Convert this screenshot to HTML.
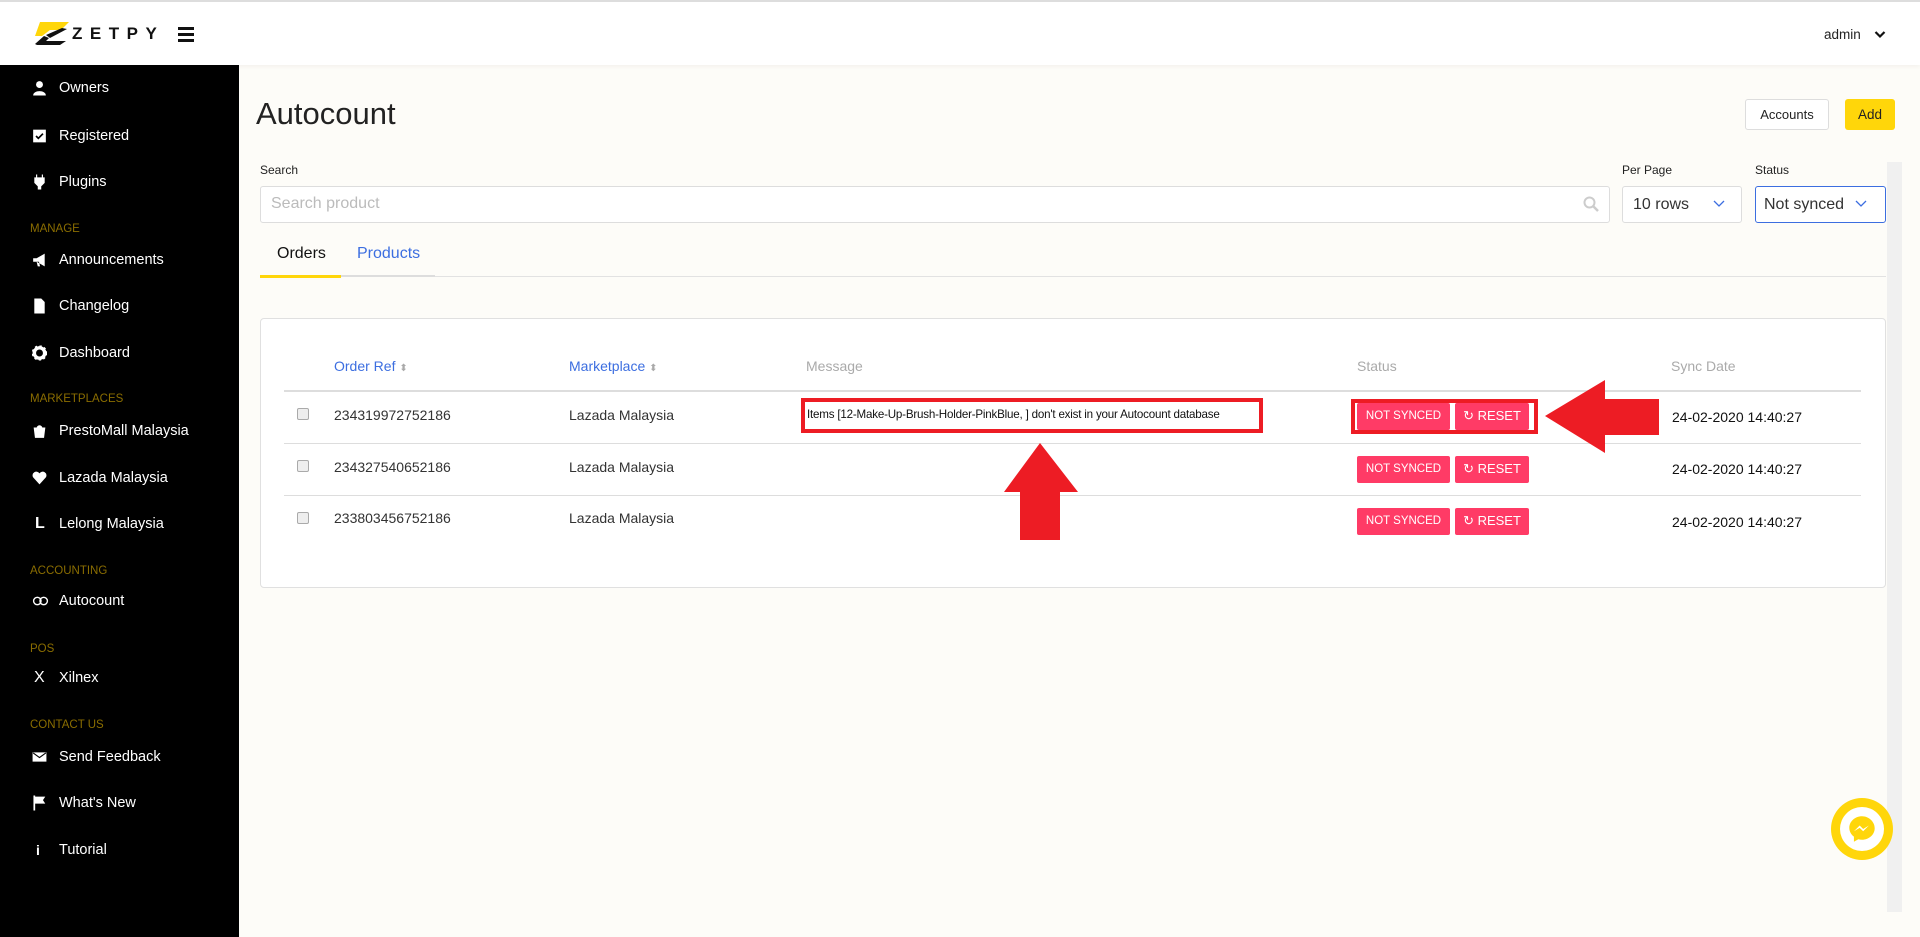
<!DOCTYPE html>
<html><head><meta charset="utf-8"><style>
*{margin:0;padding:0;box-sizing:border-box}
body{width:1920px;height:937px;overflow:hidden;background:#fdfcf8;font-family:"Liberation Sans",sans-serif;position:relative;color:#222}
.a{position:absolute}
#hdr{left:0;top:0;width:1920px;height:65px;background:#fff;border-top:2px solid #ddd;box-shadow:0 2px 4px rgba(0,0,0,.04)}
#side{left:0;top:65px;width:239px;height:872px;background:#000}
.it{position:absolute;left:59px;color:#fff;font-size:14.5px;transform:translateY(-50%)}
.ic{position:absolute;left:32px;width:15px;height:15px;transform:translateY(-50%)}
.sec{position:absolute;left:30px;color:#8a6d00;font-size:11.5px;transform:translateY(-50%)}
.th{position:absolute;top:366px;transform:translateY(-50%);font-size:14px}
.td{position:absolute;transform:translateY(-50%);font-size:14px;color:#333}
.cb{position:absolute;left:297px;width:12px;height:12px;border:1px solid #aaa;border-radius:2px;background:#eee;transform:translateY(-50%)}
.ln{position:absolute;left:284px;width:1577px;height:1px;background:#ddd}
.ns{position:absolute;left:1357px;width:93px;height:27px;background:#ff3b66;color:#fff;font-size:11.5px;text-align:center;line-height:27px;border-radius:2px}
.rs{position:absolute;left:1455px;width:74px;height:27px;background:#ff3b66;color:#fff;font-size:13px;text-align:center;line-height:26px;border-radius:2px}
.dt{position:absolute;left:1672px;font-size:14px;color:#111;transform:translateY(-50%)}
</style></head><body>
<div id="hdr" class="a">
<svg class="a" style="left:34px;top:19px" width="36" height="25" viewBox="0 0 36 25"><path d="M6 1h29l-8 8H16l-8 6H1z" fill="#ffd60a"/><path d="M1 23l9-8 5 2-3 3h20l-6 4H3z" fill="#111"/><path d="M12 14l16-7 5 1-17 9z" fill="#111"/></svg>
<div class="a" style="left:72px;top:22px;font-size:17px;font-weight:bold;letter-spacing:7.5px;color:#111">ZETPY</div>
<div class="a" style="left:178px;top:25px;width:16px;height:3px;background:#111"></div>
<div class="a" style="left:178px;top:31px;width:16px;height:3px;background:#111"></div>
<div class="a" style="left:178px;top:37px;width:16px;height:3px;background:#111"></div>
<div class="a" style="left:1824px;top:25px;font-size:13.5px;color:#222">admin</div>
<svg class="a" style="left:1874px;top:28px" width="12" height="9" viewBox="0 0 12 9"><path d="M1.5 2l4.5 4.5L10.5 2" stroke="#111" stroke-width="2.2" fill="none"/></svg>
</div>
<div id="side" class="a"></div>
<svg class="ic" style="top:88px" viewBox="0 0 13 13"><circle cx="6.5" cy="3.5" r="3" fill="#fff"/><path d="M1 13c0-5 11-5 11 0z" fill="#fff"/></svg><div class="it" style="top:88px">Owners</div>
<svg class="ic" style="top:136px" viewBox="0 0 13 13"><rect x="1" y="1" width="11" height="11" fill="#fff"/><path d="M3.5 6.5l2 2 4-4" stroke="#000" stroke-width="1.5" fill="none"/></svg><div class="it" style="top:136px">Registered</div>
<svg class="ic" style="top:182px" viewBox="0 0 13 13"><path d="M4 0v3M9 0v3M2.5 3h8v4l-3 3v3h-2v-3l-3-3z" stroke="#fff" fill="#fff"/></svg><div class="it" style="top:182px">Plugins</div>
<div class="sec" style="top:229px">MANAGE</div>
<svg class="ic" style="top:260px" viewBox="0 0 13 13"><path d="M1 5h3l7-4v11L4 8H1z M4 8l1 4h2l-1-4" fill="#fff"/></svg><div class="it" style="top:260px">Announcements</div>
<svg class="ic" style="top:306px" viewBox="0 0 13 13"><path d="M2 0h6l3 3v10H2z" fill="#fff"/></svg><div class="it" style="top:306px">Changelog</div>
<svg class="ic" style="top:353px" viewBox="0 0 13 13"><circle cx="6.5" cy="6.5" r="4.5" fill="none" stroke="#fff" stroke-width="3"/><circle cx="6.5" cy="6.5" r="6" fill="none" stroke="#fff" stroke-width="1.5" stroke-dasharray="2 2"/></svg><div class="it" style="top:353px">Dashboard</div>
<div class="sec" style="top:399px">MARKETPLACES</div>
<svg class="ic" style="top:431px" viewBox="0 0 13 13"><path d="M2 4h9l-1 8H3z M4.5 4a2 2 0 014 0" fill="#fff" stroke="#fff"/></svg><div class="it" style="top:431px">PrestoMall Malaysia</div>
<svg class="ic" style="top:478px" viewBox="0 0 13 13"><path d="M6.5 12L1 6a3 3 0 015.5-3.5A3 3 0 0112 6z" fill="#fff"/></svg><div class="it" style="top:478px">Lazada Malaysia</div>
<div class="it" style="top:524px;left:35px;font-weight:bold;font-size:16px">L</div><div class="it" style="top:524px">Lelong Malaysia</div>
<div class="sec" style="top:571px">ACCOUNTING</div>
<svg class="ic" style="top:601px;width:17px" viewBox="0 0 16 13"><circle cx="5" cy="6.5" r="3.5" fill="none" stroke="#fff" stroke-width="1.3"/><circle cx="11" cy="6.5" r="3.5" fill="none" stroke="#fff" stroke-width="1.3"/></svg><div class="it" style="top:601px">Autocount</div>
<div class="sec" style="top:649px">POS</div>
<div class="it" style="top:678px;left:34px;font-size:16px">X</div><div class="it" style="top:678px">Xilnex</div>
<div class="sec" style="top:725px">CONTACT US</div>
<svg class="ic" style="top:757px" viewBox="0 0 13 13"><rect x="0.5" y="2.5" width="12" height="8" fill="#fff"/><path d="M1 3l5.5 4 5.5-4" stroke="#000" fill="none"/></svg><div class="it" style="top:757px">Send Feedback</div>
<svg class="ic" style="top:803px" viewBox="0 0 13 13"><path d="M2 0v13" stroke="#fff" stroke-width="1.5"/><path d="M2.5 1h9l-2 3 2 3h-9z" fill="#fff"/></svg><div class="it" style="top:803px">What's New</div>
<div class="it" style="top:850px;left:36px;font-weight:bold;font-size:14px">i</div><div class="it" style="top:850px">Tutorial</div>

<div class="a" style="left:256px;top:96px;font-size:31px;color:#222">Autocount</div>
<div class="a" style="left:1745px;top:99px;width:84px;height:31px;border:1px solid #ddd;border-radius:3px;background:#fff;font-size:13px;text-align:center;line-height:29px;color:#222">Accounts</div>
<div class="a" style="left:1845px;top:99px;width:50px;height:31px;border-radius:3px;background:#ffd60a;font-size:13.5px;text-align:center;line-height:31px;color:#222">Add</div>
<div class="a" style="left:1887px;top:162px;width:15px;height:750px;background:#f0f0f0"></div>
<div class="a" style="left:260px;top:163px;font-size:12px">Search</div>
<div class="a" style="left:260px;top:186px;width:1350px;height:37px;border:1px solid #ddd;border-radius:3px;background:#fff"></div>
<div class="a" style="left:271px;top:195px;font-size:16px;color:#bbb">Search product</div>
<svg class="a" style="left:1583px;top:196px" width="16" height="16" viewBox="0 0 16 16"><circle cx="6.5" cy="6.5" r="5" stroke="#ccc" stroke-width="2" fill="none"/><path d="M10 10l5 5" stroke="#ccc" stroke-width="2.5"/></svg>
<div class="a" style="left:1622px;top:163px;font-size:12px">Per Page</div>
<div class="a" style="left:1622px;top:186px;width:120px;height:37px;border:1px solid #ddd;border-radius:3px;background:#fff;font-size:16px;padding:9px 0 0 10px;color:#333">10 rows</div>
<svg class="a" style="left:1713px;top:200px" width="12" height="8" viewBox="0 0 12 8"><path d="M1 1l5 5 5-5" stroke="#3c6ee0" stroke-width="1.3" fill="none"/></svg>
<div class="a" style="left:1755px;top:163px;font-size:12px">Status</div>
<div class="a" style="left:1755px;top:186px;width:131px;height:37px;border:1.5px solid #3c6ee0;border-radius:3px;background:#fff;font-size:16px;padding:9px 0 0 8px;color:#333">Not synced</div>
<svg class="a" style="left:1855px;top:200px" width="12" height="8" viewBox="0 0 12 8"><path d="M1 1l5 5 5-5" stroke="#3c6ee0" stroke-width="1.3" fill="none"/></svg>
<div class="a" style="left:277px;top:245px;font-size:16px;color:#111">Orders</div>
<div class="a" style="left:357px;top:245px;font-size:16px;color:#3c6ee0">Products</div>
<div class="a" style="left:260px;top:276px;width:1626px;height:1px;background:#e2e2e2"></div>
<div class="a" style="left:260px;top:275px;width:175px;height:2px;background:#ddd"></div>
<div class="a" style="left:260px;top:275px;width:81px;height:3px;background:#ffd60a"></div>

<div class="a" style="left:260px;top:318px;width:1626px;height:270px;background:#fff;border:1.5px solid #e0e0e0;border-radius:4px"></div>
<div class="th" style="left:334px;color:#3c6ee0">Order Ref <span style="color:#aaa;font-size:10px">&#x2B0D;</span></div>
<div class="th" style="left:569px;color:#3c6ee0">Marketplace <span style="color:#aaa;font-size:10px">&#x2B0D;</span></div>
<div class="th" style="left:806px;color:#aaa">Message</div>
<div class="th" style="left:1357px;color:#aaa">Status</div>
<div class="th" style="left:1671px;color:#aaa">Sync Date</div>
<div class="ln" style="top:390px;height:2px"></div>
<div class="ln" style="top:443px"></div>
<div class="ln" style="top:495px"></div>
<div class="cb" style="top:414px"></div><div class="cb" style="top:466px"></div><div class="cb" style="top:518px"></div>
<div class="td" style="left:334px;top:415px">234319972752186</div>
<div class="td" style="left:334px;top:467px">234327540652186</div>
<div class="td" style="left:334px;top:518px">233803456752186</div>
<div class="td" style="left:569px;top:415px">Lazada Malaysia</div>
<div class="td" style="left:569px;top:467px">Lazada Malaysia</div>
<div class="td" style="left:569px;top:518px">Lazada Malaysia</div>
<div class="a" style="left:801px;top:398px;width:462px;height:35px;border:4px solid #ed1c24;background:#fff"></div>
<div class="a" style="left:807px;top:408px;font-size:11.6px;color:#111;letter-spacing:-0.2px;white-space:nowrap">Items [12-Make-Up-Brush-Holder-PinkBlue, ] don't exist in your Autocount database</div>
<div class="a" style="left:1351px;top:399px;width:187px;height:35px;border:4px solid #ed1c24"></div>
<div class="ns" style="top:403px">NOT SYNCED</div><div class="rs" style="top:403px">&#x21BB; RESET</div>
<div class="ns" style="top:456px">NOT SYNCED</div><div class="rs" style="top:456px">&#x21BB; RESET</div>
<div class="ns" style="top:508px">NOT SYNCED</div><div class="rs" style="top:508px">&#x21BB; RESET</div>
<div class="dt" style="top:417px">24-02-2020 14:40:27</div>
<div class="dt" style="top:469px">24-02-2020 14:40:27</div>
<div class="dt" style="top:522px">24-02-2020 14:40:27</div>
<svg class="a" style="left:0;top:0" width="1920" height="937"><path d="M1040 443L1078 492H1060V540H1020V492H1004Z" fill="#ed1c24"/><path d="M1545 416L1605 380V399H1659V435H1605V453Z" fill="#ed1c24"/></svg>
<div class="a" style="left:1831px;top:798px;width:62px;height:62px;border-radius:50%;background:#ffd60a"></div>
<div class="a" style="left:1840px;top:807px;width:44px;height:44px;border-radius:50%;background:#fff"></div>
<svg class="a" style="left:1847px;top:814px" width="30" height="30" viewBox="0 0 26 26"><path d="M13 2C7 2 2 6.5 2 12c0 3 1.5 5.8 4 7.6V24l3.8-2.1c1 .3 2.1.4 3.2.4 6 0 11-4.5 11-10S19 2 13 2z" fill="#ffd60a"/><path d="M6 15l5-5 3 3 5-3-5 5-3-3z" fill="#fff"/></svg>
</body></html>
